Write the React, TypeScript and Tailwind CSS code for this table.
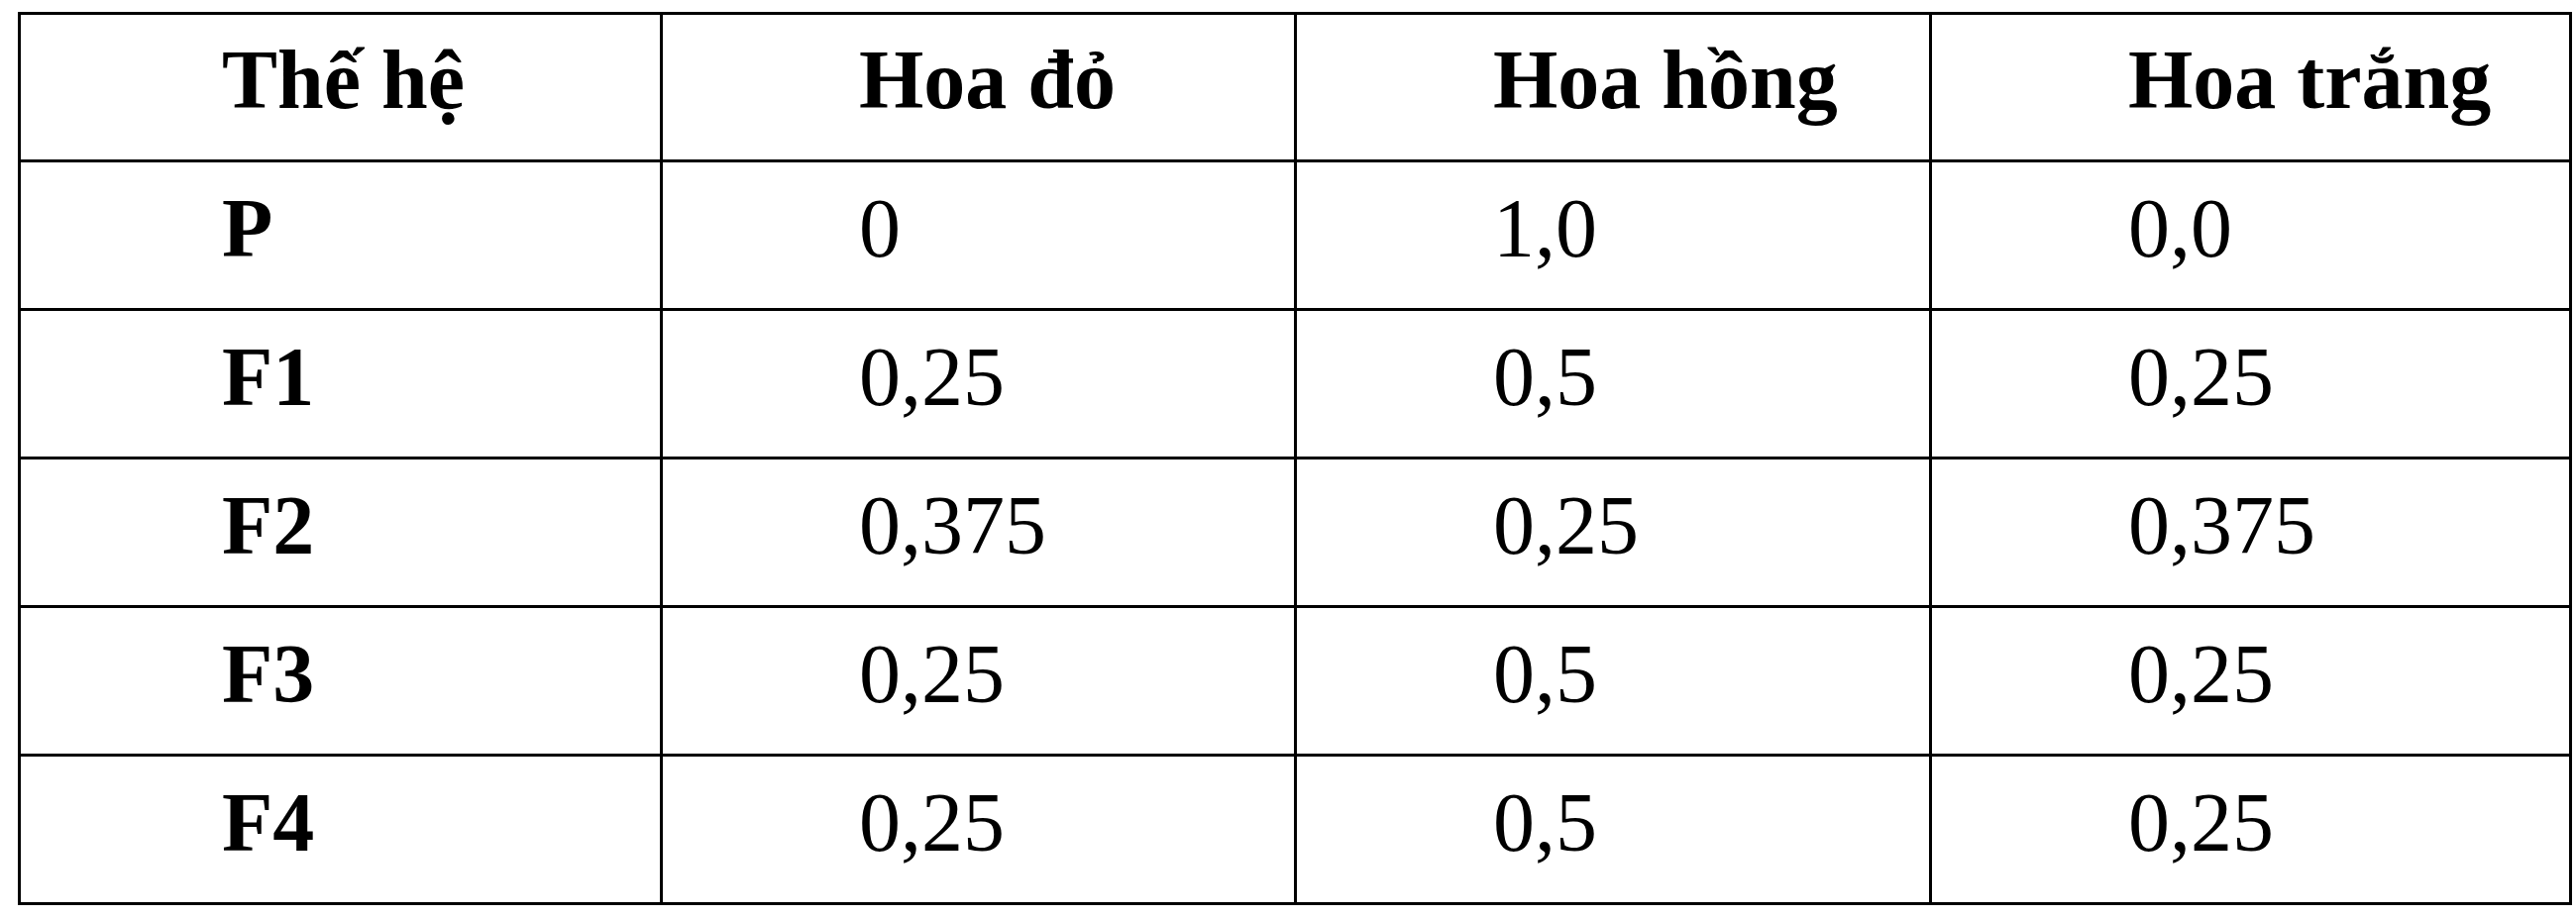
const header = ['Thế hệ', 'Hoa đỏ', 'Hoa hồng', 'Hoa trắng'];

const rows: string[][] = [
  ['P', '0', '1,0', '0,0'],
  ['F1', '0,25', '0,5', '0,25'],
  ['F2', '0,375', '0,25', '0,375'],
  ['F3', '0,25', '0,5', '0,25'],
  ['F4', '0,25', '0,5', '0,25'],
];

export default function App() {
  return (
    <div className="w-[2600px] h-[927px] bg-white pt-[12px] pl-[18px] font-['Liberation_Serif','Times_New_Roman',serif] text-black">
      <table className="border-collapse border-[3px] border-black table-fixed w-[2575px]">
        <colgroup>
          <col className="w-[648px]" />
          <col className="w-[640px]" />
          <col className="w-[641px]" />
          <col className="w-[646px]" />
        </colgroup>
        <thead>
          <tr className="h-[149px]">
            {header.map((h, i) => (
              <th
                key={h}
                className={
                  i === 0
                    ? 'border-[3px] border-black text-left align-middle pl-[203px] pb-[14px] text-[84px] leading-none font-bold whitespace-nowrap'
                    : 'border-[3px] border-black text-left align-middle pl-[198px] pb-[14px] text-[84px] leading-none font-bold whitespace-nowrap'
                }
              >
                {h}
              </th>
            ))}
          </tr>
        </thead>
        <tbody>
          {rows.map((r) => (
            <tr key={r[0]} className="h-[150px]">
              {r.map((c, i) => (
                <td
                  key={i}
                  className={
                    i === 0
                      ? 'border-[3px] border-black text-left align-middle pl-[203px] pb-[14px] text-[84px] leading-none font-bold'
                      : 'border-[3px] border-black text-left align-middle pl-[198px] pb-[14px] text-[84px] leading-none'
                  }
                >
                  {c}
                </td>
              ))}
            </tr>
          ))}
        </tbody>
      </table>
    </div>
  );
}
